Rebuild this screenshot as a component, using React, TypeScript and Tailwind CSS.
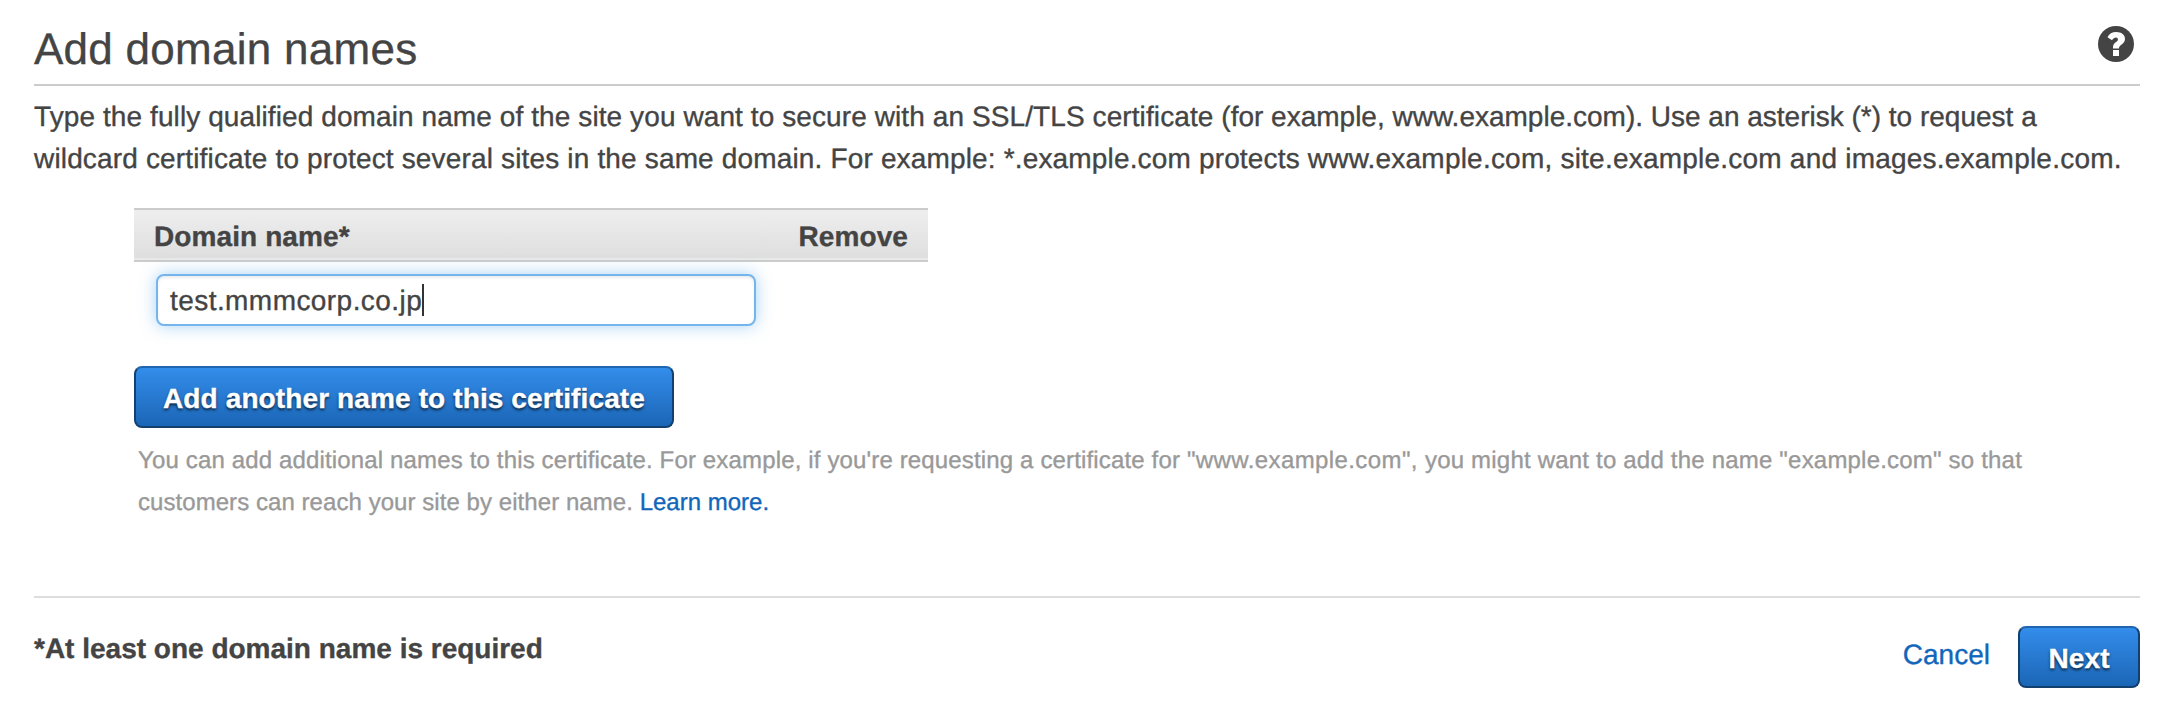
import React from "react";

function HelpIcon() {
  return (
    <svg viewBox="0 0 36 36" className="mt-[26px] mr-[6px] h-9 w-9 shrink-0" aria-label="Help">
      <circle cx="18" cy="18" r="18" fill="#444" />
      <path
        fill="#fff"
        d="M9.5 11.2C11 7.800 14.200 6 18.300 6C23.500 6 27 8.900 27 12.800C27 15.600 25.400 17.200 23.400 18.700C21.700 19.900 21 20.600 21 22.600H15V21.500C15 18.800 16.200 17.500 18 16.100C19.300 15.100 19.900 14.500 19.900 13.400C19.900 12.200 19.100 11.500 17.900 11.500C16.600 11.500 15.300 12.300 14 14.200Z"
      />
      <rect x="15" y="24" width="6" height="6" fill="#fff" />
    </svg>
  );
}

function PrimaryButton({ children, className }: { children: React.ReactNode; className: string }) {
  return (
    <button
      className={
        "flex h-[62px] shrink-0 items-center justify-center rounded-[8px] border-2 border-[#12406f] border-t-[#1f65b0] bg-linear-to-b from-[#338deb] to-[#1b66b6] pt-[3px] font-bold tracking-[0.12px] whitespace-nowrap text-white [text-shadow:0_2px_3px_rgba(0,0,0,0.75)] " +
        className
      }
    >
      {children}
    </button>
  );
}

export default function App() {
  return (
    <main className="flex h-[716px] w-[2178px] flex-col overflow-hidden bg-white px-[34px] pr-[38px] font-['Liberation_Sans',Arial,sans-serif] text-[28px] leading-[42px] text-[#444] [-webkit-text-stroke:0.35px_currentColor] [text-rendering:geometricPrecision]">
      <header className="flex h-[86px] items-start justify-between border-b-2 border-[#ccc]">
        <h1 className="mt-[25px] text-[44px] leading-[50px] tracking-[0.27px] whitespace-nowrap">Add domain names</h1>
        <HelpIcon />
      </header>

      <p className="mt-[10px] h-[84px] whitespace-nowrap">
        <span className="block">
          <span className="tracking-[0.095px]">
            Type the fully qualified domain name of the site you want to secure with an SSL/TLS certificate{" "}
          </span>
          (for example, www.example.com). Use an asterisk (*) to request a
        </span>
        <span className="block">
          <span className="tracking-[0.16px]">
            wildcard certificate to protect several sites in the same domain. For example: *.example.com protects{" "}
          </span>
          <span className="tracking-[0.22px]">www.example.com, site.example.com and images.example.com.</span>
        </span>
      </p>

      <section className="mt-[28px] ml-[100px] flex flex-col items-start">
        <div className="flex h-[54px] w-[794px] items-center justify-between border-y-2 border-[#ccc] bg-linear-to-b from-[#eee] to-[#dedede] pt-[3px] pr-[20px] pl-[20px] font-bold tracking-[0.1px] shadow-[inset_0_-2px_0_#e9e9e9]">
          <span>Domain name*</span>
          <span>Remove</span>
        </div>

        <div className="mt-3 ml-[22px] flex h-[52px] w-[600px] items-center rounded-[8px] border-2 border-[#74b5ee] bg-white pl-3 shadow-[0_0_16px_rgba(82,168,236,0.5),inset_0_2px_3px_rgba(0,0,0,0.08)]">
          <span className="pt-px tracking-[0.44px]">test.mmmcorp.co.jp</span>
          <span className="h-8 w-[2px] bg-[#333]" />
        </div>

        <PrimaryButton className="mt-10 w-[540px]">Add another name to this certificate</PrimaryButton>

        <p className="mt-[12px] ml-[4px] text-[24px] whitespace-nowrap text-[#999]">
          <span className="block">
            <span className="tracking-[0.15px]">
              You can add additional names to this certificate. For example, if you're requesting a certificate for{" "}
            </span>
            <span className="tracking-[0.4px]">"www.example.com", </span>
            <span className="tracking-[0.2px]">you might want to add the name "example.com" so that</span>
          </span>
          <span className="block">
            <span className="tracking-[0.06px]">customers can reach your site by either name. </span>
            <a href="#" className="text-[#1166bb] [-webkit-text-stroke-color:#1166bb]">Learn more.</a>
          </span>
        </p>
      </section>

      <footer className="mt-auto flex h-[120px] items-start justify-between border-t-2 border-[#ddd]">
        <strong className="mt-[30px] whitespace-nowrap">*At least one domain name is required</strong>
        <div className="mt-7 flex items-start">
          <a href="#" className="mt-[8px] mr-[28px] text-[#1166bb]">Cancel</a>
          <PrimaryButton className="w-[122px]">Next</PrimaryButton>
        </div>
      </footer>
    </main>
  );
}
